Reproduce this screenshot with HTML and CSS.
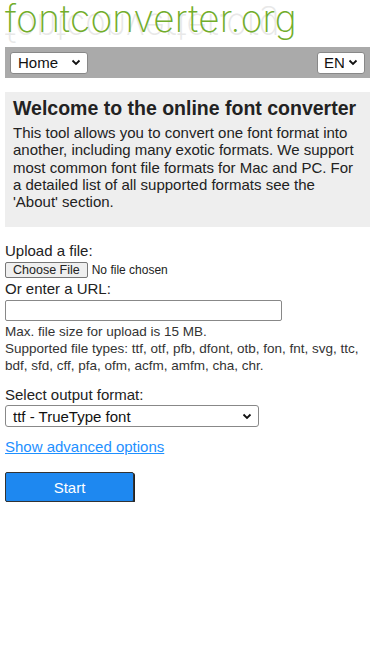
FILE: index.html
```html
<!DOCTYPE html>
<html lang="en">
<head>
<meta charset="utf-8">
<title>fontconverter.org</title>
<link rel="stylesheet" href="styles.css">
</head>
<body>
<div class="logo">
  <span class="logo-text">fontconverter.org</span>
</div>
<nav class="nav">
  <select class="sel sel-home"><option>Home</option></select>
  <select class="sel sel-lang"><option>EN</option></select>
</nav>
<section class="welcome">
  <h1>Welcome to the online font converter</h1>
  <p>This tool allows you to convert one font format into another, including many exotic formats. We support most common font file formats for Mac and PC. For a detailed list of all supported formats see the 'About' section.</p>
</section>
<form class="form">
  <div class="label">Upload a file:</div>
  <div class="file-row"><span class="file-btn">Choose File</span><span class="file-none">No file chosen</span></div>
  <div class="label">Or enter a URL:</div>
  <input class="url" type="text">
  <div class="small">Max. file size for upload is 15 MB.</div>
  <div class="small types">Supported file types: ttf, otf, pfb, dfont, otb, fon, fnt, svg, ttc, bdf, sfd, cff, pfa, ofm, acfm, amfm, cha, chr.</div>
  <div class="label out-label">Select output format:</div>
  <select class="sel sel-format"><option>ttf - TrueType font</option></select>
  <a class="adv" href="#">Show advanced options</a>
  <button type="button" class="start">Start</button>
</form>
</body>
</html>
```
FILE: styles.css
```css
* { box-sizing: border-box; }
body {
  margin: 0;
  padding: 0 5px;
  font-family: "Liberation Sans", Arial, sans-serif;
  color: #222;
  background: #fff;
}
.logo {
  height: 47px;
  overflow: visible;
}
.logo-text {
  position: relative;
  z-index: 0;
  display: inline-block;
  margin-top: -3px;
  font-family: Inter, "Noto Sans", sans-serif;
  font-weight: 200;
  font-size: 37px;
  letter-spacing: 0.2px;
  line-height: 44px;
  white-space: nowrap;
  color: #72ad2b;
}
.logo-text::before {
  content: "fontconverter.org";
  position: absolute;
  left: 0;
  top: 8px;
  color: #e8e8e8;
  transform-origin: left center;
  transform: scale(0.94, -1);
  z-index: -1;
}
.nav {
  background: #aaa;
  height: 31px;
  display: flex;
  align-items: center;
  justify-content: space-between;
  padding: 0 5px;
}
.sel {
  appearance: none;
  -webkit-appearance: none;
  font-family: "Liberation Sans", Arial, sans-serif;
  font-size: 15px;
  color: #111;
  background: #fff url("data:image/svg+xml,%3Csvg xmlns='http://www.w3.org/2000/svg' width='10' height='7' viewBox='0 0 10 7'%3E%3Cpath d='M1.5 1.5 L5 5 L8.5 1.5' fill='none' stroke='%23111' stroke-width='1.8'/%3E%3C/svg%3E") no-repeat right 6px center;
  border: 1px solid #888;
  border-radius: 3px;
  height: 22px;
  padding: 0 20px 0 7px;
  margin: 0;
}
.sel-home { width: 78px; }
.sel-lang { width: 48px; padding-left: 6px; }
.welcome {
  background: #eee;
  margin-top: 14px;
  padding: 4px 8px 17px;
}
.welcome h1 {
  font-size: 19.5px;
  font-weight: bold;
  margin: 0 0 4px;
  line-height: 24px;
  white-space: nowrap;
}
.welcome p {
  margin: 0;
  font-size: 15px;
  line-height: 17.3px;
}
.form {
  margin-top: 15px;
  display: flex;
  flex-direction: column;
  align-items: flex-start;
}
.label {
  font-size: 15px;
  line-height: 17px;
}
.file-row {
  display: flex;
  align-items: center;
  margin: 3px 0 2px;
  font-size: 12px;
}
.file-btn {
  background: #efefef;
  border: 1px solid #777;
  border-radius: 2px;
  padding: 0 7px;
  height: 16px;
  line-height: 14px;
  margin-right: 4px;
  font-size: 12.5px;
}
.url {
  margin: 3px 0 2px;
  width: 277px;
  height: 21px;
  border: 1px solid #888;
  border-radius: 2px;
}
.small {
  font-size: 13.5px;
  line-height: 17px;
  color: #333;
}
.types { width: 365px; line-height: 16.5px; margin-top: 1px; }
.out-label { margin-top: 12px; }
.sel-format {
  margin-top: 2px;
  width: 254px;
  height: 22px;
  padding-left: 7px;
}
.adv {
  margin-top: 11px;
  font-size: 15px;
  color: #1e90ff;
  text-decoration: underline;
  line-height: 17px;
}
.start {
  margin-top: 17px;
  width: 129px;
  height: 30px;
  background: #1e88f0;
  color: #fff;
  font-family: "Liberation Sans", Arial, sans-serif;
  font-size: 15px;
  border: 1px solid #333;
  border-radius: 2px;
  box-shadow: 1px 1px 0 #222;
}
```
